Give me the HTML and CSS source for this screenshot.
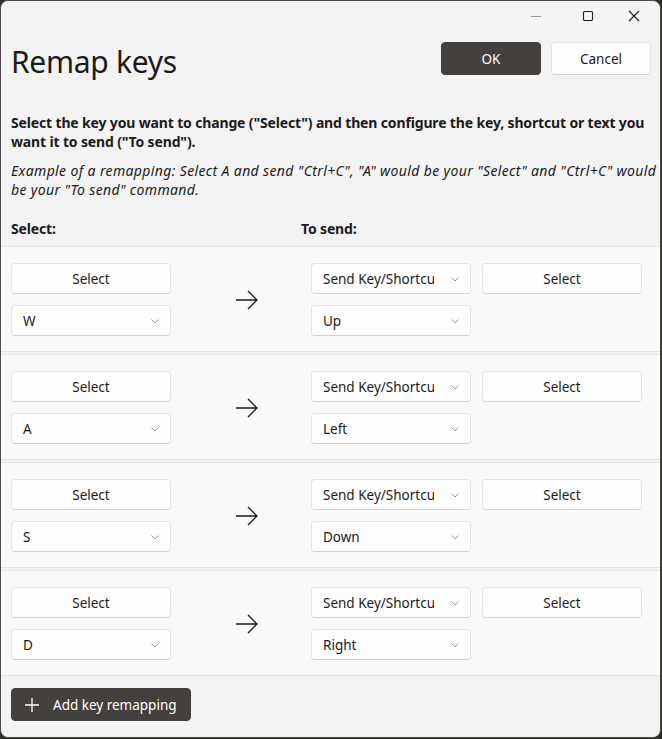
FILE: index.html
```html
<!DOCTYPE html>
<html lang="en">

<head>
	<title>Remap keys</title>
	<meta charset="utf-8"/>
	<meta name="viewport" content="width=device-width, initial-scale=1"/>

	<link rel="stylesheet" href="styles.css">
</head>

<body>
	<div class="window">
		<div class="titlebar">
			<span class="ctl"><svg width="12" height="12" viewBox="0 0 12 12"><path d="M1 6.5h10" stroke="#a0a0a0" stroke-width="1"/></svg></span>
			<span class="ctl"><svg width="12" height="12" viewBox="0 0 12 12"><rect x="1.5" y="1.5" width="9" height="9" rx="1.2" fill="none" stroke="#1b1b1b" stroke-width="1.1"/></svg></span>
			<span class="ctl"><svg width="12" height="12" viewBox="0 0 12 12"><path d="M1 1l10 10M11 1L1 11" stroke="#1b1b1b" stroke-width="1.1"/></svg></span>
		</div>

		<div class="head">
			<h1>Remap keys</h1>
			<div class="actions">
				<button class="btn primary">OK</button>
				<button class="btn">Cancel</button>
			</div>
		</div>

		<p class="desc">Select the key you want to change ("Select") and then configure the key, shortcut or text you want it to send ("To send").</p>
		<p class="example">Example of a remapping: Select A and send "Ctrl+C", "A" would be your "Select" and "Ctrl+C" would be your "To send" command.</p>

		<div class="cols">
			<span>Select:</span>
			<span>To send:</span>
		</div>

		<div class="rows" id="rows"></div>

		<div class="footer">
			<button class="btn primary add">
				<svg width="16" height="16" viewBox="0 0 16 16"><path d="M8 1v14M1 8h14" stroke="#fff" stroke-width="1.3"/></svg>
				Add key remapping
			</button>
		</div>
	</div>

	<script>
		let maps = [["W", "Up"], ["A", "Left"], ["S", "Down"], ["D", "Right"]];
		let rows = document.getElementById("rows");
		let chev = '<svg width="10" height="6" viewBox="0 0 10 6"><path d="M1.5 1.5l3.5 3.5 3.5-3.5" fill="none" stroke="#9a9a9a" stroke-width="1"/></svg>';

		for(let i = 0; i < maps.length; ++i) {
			let row = document.createElement("div");
			row.className = "row";
			row.innerHTML =
				'<button class="btn">Select</button>' +
				'<div class="arrow"><svg width="24" height="20" viewBox="0 0 24 20"><path d="M1 10h21M13 1l9 9-9 9" fill="none" stroke="#1b1b1b" stroke-width="1.3"/></svg></div>' +
				'<div class="drop"><span class="clip">Send Key/Shortcut</span>' + chev + '</div>' +
				'<button class="btn">Select</button>' +
				'<div class="drop"><span>' + maps[i][0] + '</span>' + chev + '</div>' +
				'<div class="drop"><span>' + maps[i][1] + '</span>' + chev + '</div>';
			rows.appendChild(row);
		}
	</script>
</body>
</html>
```

FILE: styles.css
```css
body {
	margin: 0;
	background-color: #2f2d2a;
	font-family: "Noto Sans", "Open Sans", sans-serif;
	color: #1b1b1b;
}

.window {
	width: 659px;
	height: 736px;
	background-color: #f3f3f3;
	border: 1px solid #4a4a4a;
	border-radius: 8px;
	overflow: hidden;
}

.titlebar {
	display: flex;
	justify-content: flex-end;
	height: 30px;
	padding-right: 3px;
}

.ctl {
	width: 46px;
	display: flex;
	align-items: center;
	justify-content: center;
}

.ctl:first-child {
	margin-right: 6px;
}

.head {
	display: flex;
	align-items: flex-start;
	justify-content: space-between;
	padding: 0 9px 0 10px;
	margin-top: 9px;
}

h1 {
	font-weight: 400;
	font-size: 30px;
	line-height: 36px;
	margin: 4px 0 0 0;
	letter-spacing: -0.3px;
}

.actions {
	display: flex;
	gap: 10px;
	margin-top: 2px;
}

.btn {
	font-family: inherit;
	font-size: 13.5px;
	color: #1b1b1b;
	background: #fdfdfd;
	border: 1px solid #e5e5e5;
	border-bottom-color: #d4d4d4;
	border-radius: 4px;
	height: 31px;
	padding: 0;
}

.actions .btn {
	width: 100px;
	height: 33px;
}

.btn.primary {
	background: #43403d;
	border-color: #43403d;
	color: #fff;
}

.desc {
	font-weight: 700;
	font-size: 14px;
	line-height: 19px;
	margin: 33px 4px 0 10px;
	letter-spacing: -0.15px;
}

.example {
	font-style: italic;
	font-size: 14px;
	line-height: 19px;
	margin: 10px 0 0 10px;
	letter-spacing: 0.37px;
}

.cols {
	display: grid;
	grid-template-columns: 290px 1fr;
	font-weight: 700;
	font-size: 14px;
	padding: 0 10px;
	margin-top: 20px;
	height: 27px;
	letter-spacing: -0.15px;
}

.row {
	display: grid;
	grid-template-columns: 160px 118px 160px 160px;
	grid-template-rows: 31px 31px;
	column-gap: 11px;
	row-gap: 11px;
	padding: 16px 10px 15px 10px;
	background: #f9f9f9;
	border-top: 1px solid #e5e5e5;
	border-bottom: 1px solid #e5e5e5;
	margin-bottom: 2px;
}

.row .arrow {
	grid-column: 2;
	grid-row: 1 / span 2;
	display: flex;
	align-items: center;
	justify-content: center;
	padding-left: 12px;
}

.row > .btn:first-child { grid-column: 1; grid-row: 1; }
.row > .drop:nth-child(3) { grid-column: 3; grid-row: 1; }
.row > .btn:nth-child(4) { grid-column: 4; grid-row: 1; }
.row > .drop:nth-child(5) { grid-column: 1; grid-row: 2; }
.row > .drop:nth-child(6) { grid-column: 3; grid-row: 2; }

.drop {
	display: flex;
	align-items: center;
	justify-content: space-between;
	font-size: 13.5px;
	background: #fdfdfd;
	border: 1px solid #e5e5e5;
	border-bottom-color: #d4d4d4;
	border-radius: 4px;
	padding: 0 10px 0 11px;
}

.drop .clip {
	width: 111px;
	overflow: hidden;
	white-space: nowrap;
}

.footer {
	padding: 10px 10px;
}

.btn.add {
	display: flex;
	align-items: center;
	gap: 13px;
	height: 33px;
	padding: 0 13px 0 12px;
	font-size: 13.5px;
}
```
